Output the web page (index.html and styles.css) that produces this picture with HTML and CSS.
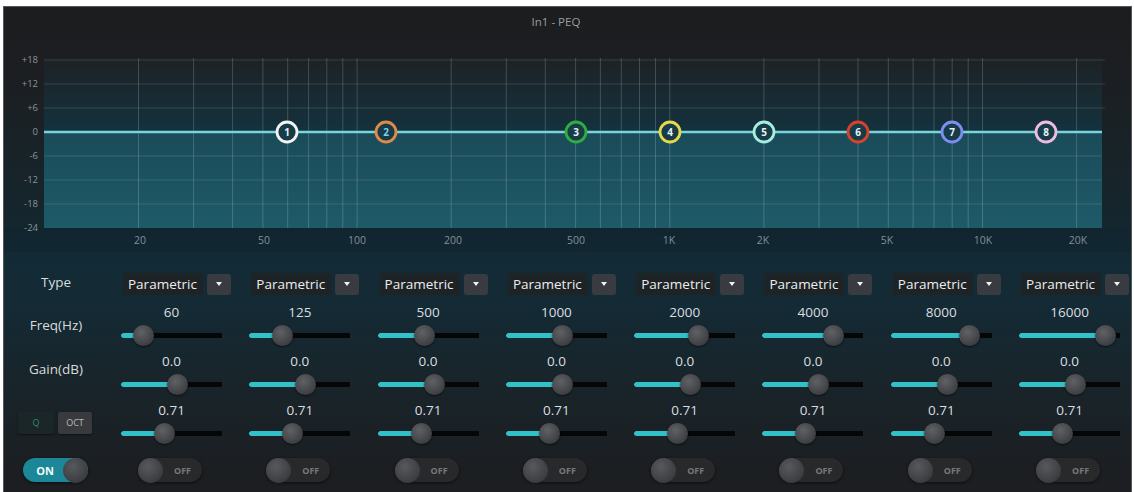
FILE: index.html
```html
<!DOCTYPE html>
<html>
  <head>
    <title>In1 - PEQ</title>
    <link rel="stylesheet" href="styles.css">
  </head>
  <body>
    <div class="panel">
      <div class="title">In1 - PEQ</div>

      <svg class="graph" width="1127" height="200" viewBox="4 52 1127 200">
        <defs>
          <linearGradient id="above" x1="0" y1="0" x2="0" y2="1">
            <stop offset="0" stop-color="#1d2225"/>
            <stop offset="1" stop-color="#14323e"/>
          </linearGradient>
          <linearGradient id="below" x1="0" y1="0" x2="0" y2="1">
            <stop offset="0" stop-color="#1a4b59"/>
            <stop offset="1" stop-color="#1e5a68"/>
          </linearGradient>
        </defs>
        <rect x="44" y="58" width="1058" height="74" fill="url(#above)"/>
        <rect x="44" y="132" width="1058" height="96" fill="url(#below)"/>
        <rect x="4" y="228" width="1127" height="24" class="axis-band"/>

        <path class="hgrid" d="M44 60H1105M44 84H1105M44 108H1105M44 156H1102M44 180H1102M44 204H1102"/>
        <path class="vgrid" d="M138.5 58V228M193.6 58V228M232.6 58V228M262.9 58V228M287.7 58V228M308.6 58V228M326.8 58V228M342.8 58V228M357.1 58V228M451.2 58V228M506.3 58V228M545.3 58V228M575.6 58V228M600.4 58V228M621.3 58V228M639.5 58V228M655.5 58V228M669.8 58V228M763.9 58V228M819 58V228M858 58V228M888.3 58V228M913.1 58V228M934 58V228M952.2 58V228M968.2 58V228M982.5 58V228M1076.6 58V228"/>
        <path class="curve" d="M44 132H1102"/>

        <g class="ylab">
          <text x="38" y="63">+18</text>
          <text x="38" y="87">+12</text>
          <text x="38" y="111">+6</text>
          <text x="38" y="135">0</text>
          <text x="38" y="159">-6</text>
          <text x="38" y="183">-12</text>
          <text x="38" y="207">-18</text>
          <text x="38" y="231">-24</text>
        </g>
        <g class="xlab">
          <text x="140" y="244">20</text>
          <text x="264" y="244">50</text>
          <text x="357" y="244">100</text>
          <text x="453" y="244">200</text>
          <text x="576" y="244">500</text>
          <text x="669" y="244">1K</text>
          <text x="763" y="244">2K</text>
          <text x="887" y="244">5K</text>
          <text x="983" y="244">10K</text>
          <text x="1078" y="244">20K</text>
        </g>

        <g class="band b1"><circle cx="287" cy="132" r="10"/><text x="287" y="135.5">1</text></g>
        <g class="band b2"><circle cx="386" cy="132" r="10"/><text x="386" y="135.5">2</text></g>
        <g class="band b3"><circle cx="576" cy="132" r="10"/><text x="576" y="135.5">3</text></g>
        <g class="band b4"><circle cx="670" cy="132" r="10"/><text x="670" y="135.5">4</text></g>
        <g class="band b5"><circle cx="764" cy="132" r="10"/><text x="764" y="135.5">5</text></g>
        <g class="band b6"><circle cx="858" cy="132" r="10"/><text x="858" y="135.5">6</text></g>
        <g class="band b7"><circle cx="952" cy="132" r="10"/><text x="952" y="135.5">7</text></g>
        <g class="band b8"><circle cx="1046" cy="132" r="10"/><text x="1046" y="135.5">8</text></g>
      </svg>

      <div class="controls">
        <!-- type -->
        <div class="lbl lbl-type">Type</div>
        <div class="select"><span class="select-text">Parametric</span><span class="select-btn"></span></div>
        <div class="select"><span class="select-text">Parametric</span><span class="select-btn"></span></div>
        <div class="select"><span class="select-text">Parametric</span><span class="select-btn"></span></div>
        <div class="select"><span class="select-text">Parametric</span><span class="select-btn"></span></div>
        <div class="select"><span class="select-text">Parametric</span><span class="select-btn"></span></div>
        <div class="select"><span class="select-text">Parametric</span><span class="select-btn"></span></div>
        <div class="select"><span class="select-text">Parametric</span><span class="select-btn"></span></div>
        <div class="select"><span class="select-text">Parametric</span><span class="select-btn"></span></div>

        <!-- freq -->
        <div class="lbl">Freq(Hz)</div>
        <div class="param"><div class="val">60</div><div class="slider"><div class="fill" style="width:22px"></div><div class="thumb"></div></div></div>
        <div class="param"><div class="val">125</div><div class="slider"><div class="fill" style="width:33px"></div><div class="thumb"></div></div></div>
        <div class="param"><div class="val">500</div><div class="slider"><div class="fill" style="width:46px"></div><div class="thumb"></div></div></div>
        <div class="param"><div class="val">1000</div><div class="slider"><div class="fill" style="width:56px"></div><div class="thumb"></div></div></div>
        <div class="param"><div class="val">2000</div><div class="slider"><div class="fill" style="width:64px"></div><div class="thumb"></div></div></div>
        <div class="param"><div class="val">4000</div><div class="slider"><div class="fill" style="width:71px"></div><div class="thumb"></div></div></div>
        <div class="param"><div class="val">8000</div><div class="slider"><div class="fill" style="width:78px"></div><div class="thumb"></div></div></div>
        <div class="param"><div class="val">16000</div><div class="slider"><div class="fill" style="width:86px"></div><div class="thumb"></div></div></div>

        <!-- gain -->
        <div class="lbl lbl-gain">Gain(dB)</div>
        <div class="param"><div class="val">0.0</div><div class="slider"><div class="fill" style="width:56px"></div><div class="thumb"></div></div></div>
        <div class="param"><div class="val">0.0</div><div class="slider"><div class="fill" style="width:56px"></div><div class="thumb"></div></div></div>
        <div class="param"><div class="val">0.0</div><div class="slider"><div class="fill" style="width:56px"></div><div class="thumb"></div></div></div>
        <div class="param"><div class="val">0.0</div><div class="slider"><div class="fill" style="width:56px"></div><div class="thumb"></div></div></div>
        <div class="param"><div class="val">0.0</div><div class="slider"><div class="fill" style="width:56px"></div><div class="thumb"></div></div></div>
        <div class="param"><div class="val">0.0</div><div class="slider"><div class="fill" style="width:56px"></div><div class="thumb"></div></div></div>
        <div class="param"><div class="val">0.0</div><div class="slider"><div class="fill" style="width:56px"></div><div class="thumb"></div></div></div>
        <div class="param"><div class="val">0.0</div><div class="slider"><div class="fill" style="width:56px"></div><div class="thumb"></div></div></div>

        <!-- q -->
        <div class="qoct"><span class="seg seg-q">Q</span><span class="seg seg-oct">OCT</span></div>
        <div class="param"><div class="val">0.71</div><div class="slider"><div class="fill" style="width:43px"></div><div class="thumb"></div></div></div>
        <div class="param"><div class="val">0.71</div><div class="slider"><div class="fill" style="width:43px"></div><div class="thumb"></div></div></div>
        <div class="param"><div class="val">0.71</div><div class="slider"><div class="fill" style="width:43px"></div><div class="thumb"></div></div></div>
        <div class="param"><div class="val">0.71</div><div class="slider"><div class="fill" style="width:43px"></div><div class="thumb"></div></div></div>
        <div class="param"><div class="val">0.71</div><div class="slider"><div class="fill" style="width:43px"></div><div class="thumb"></div></div></div>
        <div class="param"><div class="val">0.71</div><div class="slider"><div class="fill" style="width:43px"></div><div class="thumb"></div></div></div>
        <div class="param"><div class="val">0.71</div><div class="slider"><div class="fill" style="width:43px"></div><div class="thumb"></div></div></div>
        <div class="param"><div class="val">0.71</div><div class="slider"><div class="fill" style="width:43px"></div><div class="thumb"></div></div></div>

        <!-- bypass -->
        <div class="toggle on"><span class="state">ON</span><span class="knob"></span></div>
        <div class="toggle"><span class="knob"></span><span class="state">OFF</span></div>
        <div class="toggle"><span class="knob"></span><span class="state">OFF</span></div>
        <div class="toggle"><span class="knob"></span><span class="state">OFF</span></div>
        <div class="toggle"><span class="knob"></span><span class="state">OFF</span></div>
        <div class="toggle"><span class="knob"></span><span class="state">OFF</span></div>
        <div class="toggle"><span class="knob"></span><span class="state">OFF</span></div>
        <div class="toggle"><span class="knob"></span><span class="state">OFF</span></div>
        <div class="toggle"><span class="knob"></span><span class="state">OFF</span></div>
      </div>
    </div>
  </body>
</html>
```

FILE: styles.css
```css
/* PEQ panel */
body { margin: 0; background: #fff; font-family: "Open Sans", "Noto Sans", sans-serif; }

.panel {
  margin: 7px 0 0 4px;
  width: 1127px;
  height: 485px;
  overflow: hidden;
  box-shadow: 0 0 0 1px #55585b;
  background: linear-gradient(180deg, #1c1d1f 0, #1c1e21 60px, #182328 150px, #14262e 215px,
    #132b36 260px, #142a34 300px, #18252b 370px, #1c1e21 470px);
}

.title { height: 45px; box-sizing: border-box; padding: 8px 23px 0 0; text-align: center; font-size: 11.5px; line-height: 14px; color: #9a9da1; }

/* graph */
.graph { display: block; }
.graph .axis-band { fill: #0f2430; opacity: .55; }
.graph .hgrid { stroke: rgba(255, 255, 255, .13); stroke-width: 1; fill: none; }
.graph .vgrid { stroke: rgba(255, 255, 255, .18); stroke-width: 1; fill: none; }
.graph .curve { stroke: #78d5de; stroke-width: 2.5; fill: none; }
.graph text { font-family: "Open Sans", "Noto Sans", sans-serif; }
.graph .ylab text { font-size: 9.5px; fill: #8d9397; text-anchor: end; }
.graph .xlab text { font-size: 10.5px; fill: #7f909a; text-anchor: middle; }

.band circle { fill: #173b47; stroke-width: 2.8; }
.band text { font-size: 10px; font-weight: bold; fill: #e6f2f6; text-anchor: middle; }
.b1 circle { stroke: #f2f4f5; }
.b2 circle { stroke: #e08a48; }
.b2 text { fill: #7ccff0; }
.b3 circle { stroke: #2fae3f; }
.b4 circle { stroke: #e6d84a; }
.b5 circle { stroke: #a6efe0; }
.b6 circle { stroke: #d9412f; }
.b7 circle { stroke: #7f8cf0; }
.b8 circle { stroke: #eebde0; }

/* controls grid */
.controls {
  display: grid;
  grid-template-columns: 99px repeat(8, 112.3px);
  grid-template-rows: 23px 41px 41px 41px 31px;
  column-gap: 16px;
  row-gap: 8px;
  padding-top: 21px;
}

.lbl { align-self: center; padding-left: 5px; text-align: center; font-size: 13.5px; color: #d7dbde; }
.lbl-type { margin-bottom: 6px; }
.lbl-gain { margin-bottom: 10px; }

.select { display: flex; align-items: center; margin-left: 4px; width: 108px; height: 22px; }
.select-text { flex: 1; height: 22px; line-height: 22px; padding-left: 5px; font-size: 13.5px; color: #eceef0; background: #1e2326; border-radius: 3px; }
.select-btn { display: flex; align-items: center; justify-content: center; margin-left: 4px; width: 24px; height: 21px; background: #383b3f; border-radius: 3px; }
.select-btn::after { content: ""; border-left: 3.5px solid transparent; border-right: 3.5px solid transparent; border-top: 4px solid #f2f2f2; }

.param { display: flex; flex-direction: column; margin-left: 2px; width: 101px; }
.val { height: 16px; line-height: 16px; text-align: center; font-size: 13.5px; color: #dadee1; }
.slider {
  display: flex;
  align-items: center;
  margin-top: 5px;
  height: 20px;
  background: linear-gradient(#050607, #050607) center / 100% 5px no-repeat;
}
.fill { flex: none; height: 5px; background: #33c1c9; border-radius: 3px; }
.thumb {
  flex: none;
  margin-left: -10px;
  width: 21px;
  height: 21px;
  border-radius: 50%;
  background: radial-gradient(circle at 40% 35%, #606164, #3c3d40 75%);
  box-shadow: 0 1px 2px rgba(0, 0, 0, .6);
}

.qoct { display: flex; align-self: center; gap: 4px; margin-left: 14px; height: 22px; }
.seg { display: flex; align-items: center; justify-content: center; height: 22px; border-radius: 2px; font-size: 9px; box-shadow: 0 1px 2px rgba(0, 0, 0, .5); }
.seg-q { width: 36px; background: #1b2628; color: #2d8a64; }
.seg-oct { width: 34px; background: #393a3d; color: #b7bbbf; }

.toggle {
  display: flex;
  align-items: center;
  align-self: end;
  margin-left: 19px;
  width: 64px;
  height: 24px;
  border-radius: 12px;
  background: #28292b;
  box-shadow: 0 1px 3px rgba(0, 0, 0, .6);
}
.toggle .knob { flex: none; width: 25px; height: 25px; border-radius: 50%; background: radial-gradient(circle at 40% 35%, #58595c, #3a3b3e 75%); }
.toggle .state { flex: 1; text-align: center; font-size: 9px; font-weight: bold; color: #77797c; }
.toggle.on { width: 65px; background: #1c8796; }
.toggle.on .state { color: #f2fbfc; font-size: 11px; padding-left: 4px; }
```
